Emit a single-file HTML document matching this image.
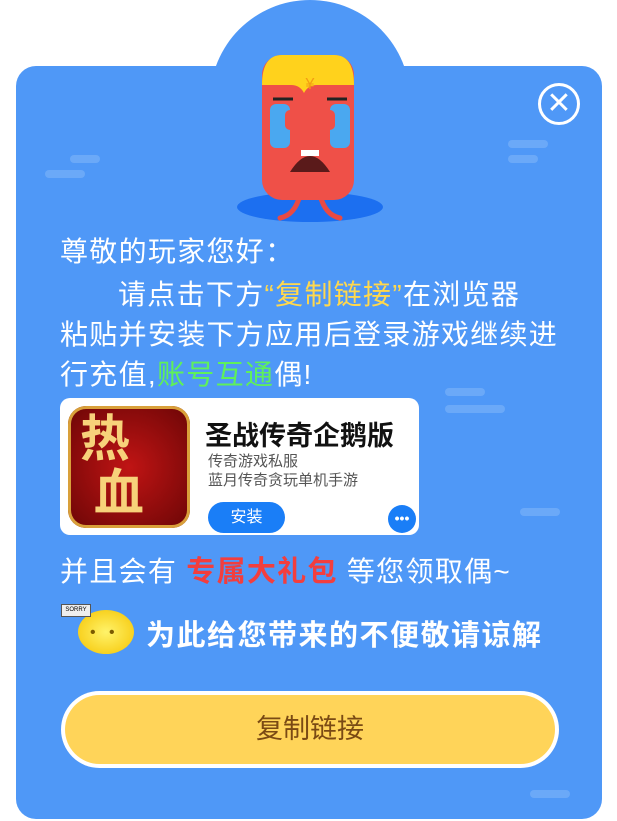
<!DOCTYPE html>
<html><head><meta charset="utf-8"><style>
body{margin:0;width:617px;height:821px;background:#fff;position:relative;overflow:hidden;font-family:"Liberation Sans","Noto Sans CJK SC",sans-serif}
.card{position:absolute;left:16px;top:66px;width:586px;height:753px;background:#4f98f7;border-radius:20px}
.bump{position:absolute;left:210px;top:0;width:200px;height:200px;border-radius:50%;background:#4f98f7}
.t{position:absolute;color:#fff;font-size:28px;white-space:nowrap;letter-spacing:1.3px}
.deco{position:absolute;background:#6ba9f8;height:8px;border-radius:4px}
</style></head><body>
<div class="bump"></div><div class="card"></div>
<div class="deco" style="left:45px;top:170px;width:40px"></div>
<div class="deco" style="left:70px;top:155px;width:30px"></div>
<div class="deco" style="left:508px;top:140px;width:40px"></div>
<div class="deco" style="left:508px;top:155px;width:30px"></div>
<div class="deco" style="left:445px;top:388px;width:40px"></div>
<div class="deco" style="left:445px;top:405px;width:60px"></div>
<div class="deco" style="left:520px;top:508px;width:40px"></div>
<div class="deco" style="left:530px;top:790px;width:40px"></div>
<svg style="position:absolute;left:230px;top:50px" width="160" height="175" viewBox="230 50 160 175">
<ellipse cx="310" cy="207" rx="73" ry="15" fill="#1c6ff0"/>
<path d="M300 195 q-5 20 -20 23 M320 195 q5 20 20 23" stroke="#e84a44" stroke-width="5" fill="none" stroke-linecap="round"/>
<rect x="262" y="55" width="92" height="145" rx="20" fill="#ef5048"/>
<path d="M262 85 q0 -30 20 -30 h52 q20 0 20 30 h-37 q-9 0 -13 8 q-4 -8 -13 -8z" fill="#ffd21c"/>
<text x="310" y="89" fill="#f39c12" font-size="16" text-anchor="middle">¥</text>
<rect x="270" y="104" width="20" height="44" rx="6" fill="#4aa8f0"/>
<rect x="330" y="104" width="20" height="44" rx="6" fill="#4aa8f0"/>
<rect x="285" y="110" width="12" height="20" rx="5" fill="#ef5048"/>
<rect x="323" y="110" width="12" height="20" rx="5" fill="#ef5048"/>
<path d="M273 99 h20 M327 99 h20" stroke="#222" stroke-width="3"/>
<path d="M290 172 q20 -32 40 0 z" fill="#5a1a1a"/>
<rect x="301" y="150" width="18" height="6" fill="#fff"/>
</svg>
<div style="position:absolute;left:538px;top:83px;width:42px;height:42px;border:3px solid #fff;border-radius:50%;box-sizing:border-box;color:#fff;font-size:30px;line-height:36px;text-align:center">✕</div>
<div class="t" style="left:60px;top:230px">尊敬的玩家您好：</div>
<div class="t" style="left:118px;top:273px">请点击下方<span style="color:#ffd84d">“复制链接”</span>在浏览器</div>
<div class="t" style="left:60px;top:313px">粘贴并安装下方应用后登录游戏继续进</div>
<div class="t" style="left:60px;top:353px">行充值,<span style="color:#5ff05a">账号互通</span>偶!</div>
<div style="position:absolute;left:60px;top:398px;width:359px;height:137px;background:#fff;border-radius:10px"></div>
<div style="position:absolute;left:68px;top:406px;width:122px;height:122px;border-radius:18px;background:radial-gradient(#c01414,#6b0606);box-shadow:inset 0 0 0 3px #d9a03a"></div>
<div style="position:absolute;left:80px;top:412px;color:#f7d27a;font-size:50px;font-weight:bold;line-height:54px">热<br>&nbsp;血</div>
<div style="position:absolute;left:205px;top:414px;font-size:27px;font-weight:bold;color:#111;letter-spacing:0px">圣战传奇企鹅版</div>
<div style="position:absolute;left:208px;top:452px;font-size:15px;color:#555;line-height:19px">传奇游戏私服<br>蓝月传奇贪玩单机手游</div>
<div style="position:absolute;left:208px;top:502px;width:77px;height:31px;border-radius:16px;background:#1a7ef7;color:#fff;font-size:16px;line-height:31px;text-align:center">安装</div>
<div style="position:absolute;left:388px;top:505px;width:28px;height:28px;border-radius:50%;background:#1a7ef7;color:#fff;font-size:14px;line-height:26px;text-align:center;font-weight:bold">•••</div>
<div class="t" style="left:60px;top:548px">并且会有 <b style="color:#f23e3e;font-size:29px">专属大礼包</b> 等您领取偶~</div>
<div style="position:absolute;left:78px;top:610px;width:56px;height:44px;border-radius:50%;background:radial-gradient(#fff36a,#f5c300)"></div>
<div style="position:absolute;left:61px;top:604px;width:28px;height:11px;background:#eee;border:1px solid #555;font-size:6px;line-height:11px;text-align:center">SORRY</div>
<div style="position:absolute;left:90px;top:624px;font-size:16px;color:#7a5a00">•&nbsp;&nbsp;&nbsp;•</div>
<div class="t" style="left:146px;top:612px;font-size:29px;font-weight:bold;letter-spacing:1.5px">为此给您带来的不便敬请谅解</div>
<div style="position:absolute;left:61px;top:691px;width:498px;height:77px;border-radius:39px;background:#fff"></div>
<div style="position:absolute;left:65px;top:695px;width:490px;height:69px;border-radius:35px;background:#ffd459;color:#7a4a14;font-size:27px;line-height:69px;text-align:center">复制链接</div>
</body></html>
